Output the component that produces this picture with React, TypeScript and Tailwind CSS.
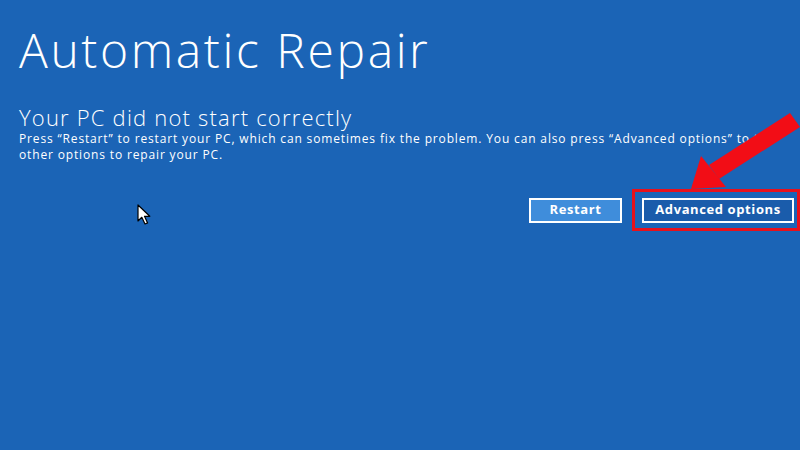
import React from "react";

export default function App() {
  return (
    <div
      className="relative w-[800px] h-[450px] overflow-hidden bg-[#1b64b6] text-white"
      style={{ fontFamily: '"Open Sans", "Noto Sans", sans-serif' }}
    >
      <div className="flex flex-col pl-[19px] pt-[22px]">
        <h1 className="text-[48px] font-light leading-[56px] tracking-[2.6px]">Automatic Repair</h1>
        <h2 className="mt-[26px] text-[22px] font-light leading-[26px] tracking-[1.2px]">Your PC did not start correctly</h2>
        <p className="mt-[1px] text-[12px] leading-[16px] tracking-[0.85px] whitespace-nowrap">
          Press “Restart” to restart your PC, which can sometimes fix the problem. You can also press “Advanced options” to try
          <br />
          other options to repair your PC.
        </p>
        <div className="mt-[26px] flex items-center justify-end">
          <button className="w-[93px] h-[25px] border-2 border-white bg-[#3f8ddb] text-[13px] font-bold tracking-[0.6px] text-white">
            Restart
          </button>
          <div className="ml-[10px] flex items-center h-[42px] border-[3px] border-[#e8111b] pl-[7px] pr-[3px]">
            <button className="w-[152px] h-[25px] border-2 border-white bg-[#1a5cab] text-[13px] font-bold tracking-[0.6px] text-white">
              Advanced options
            </button>
          </div>
        </div>
      </div>

      {/* red annotation arrow */}
      <svg className="absolute left-0 top-0" width="800" height="450" viewBox="0 0 800 450">
        <polygon points="790,113 800,127 719,179 709,165" fill="#f20d16" />
        <polygon points="701,156 726,187 691,189" fill="#f20d16" />
      </svg>

      {/* mouse cursor */}
      <svg className="absolute left-[137px] top-[204px]" width="15" height="21" viewBox="0 0 15 21">
        <path d="M1 1 L1 17 L4.8 13.3 L8 20 L10.6 18.9 L7.5 12.3 L12.8 12.3 Z" fill="#fff" stroke="#000" strokeWidth="1.2" strokeLinejoin="round" />
      </svg>
    </div>
  );
}
